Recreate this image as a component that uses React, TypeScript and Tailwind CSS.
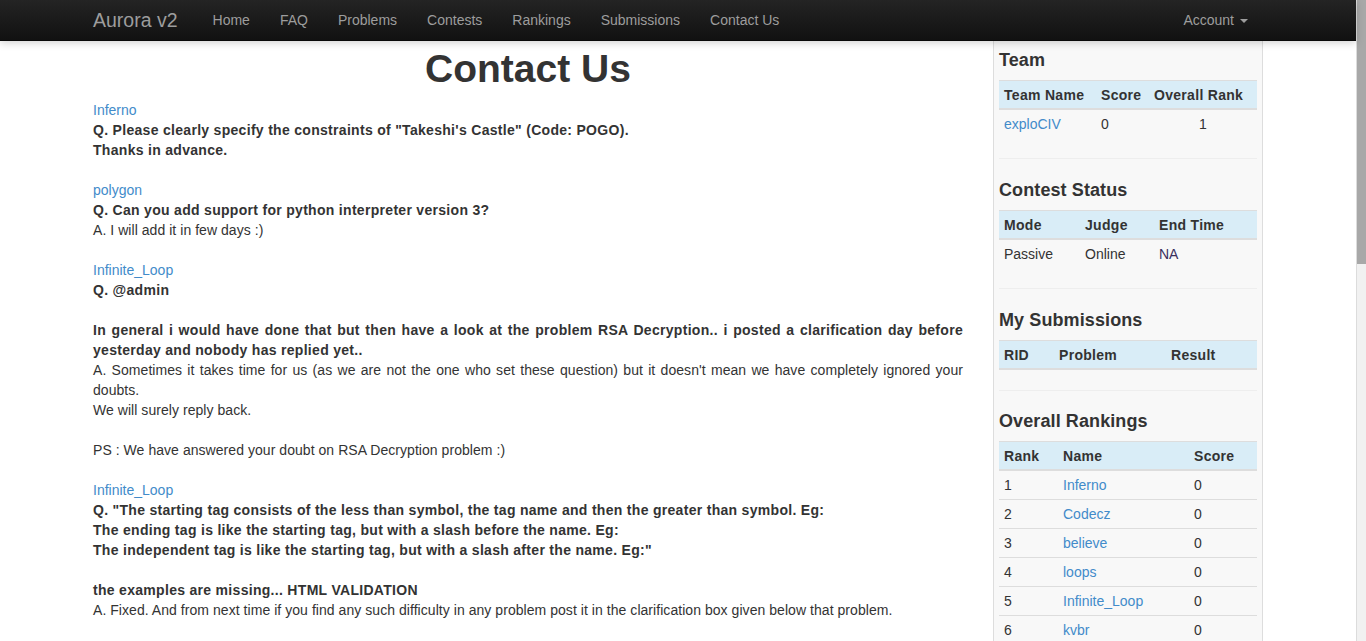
import React from 'react';

interface Entry {
  user: string;
  question: React.ReactNode;
  answer?: React.ReactNode;
}

const NAV_LINKS = ['Home', 'FAQ', 'Problems', 'Contests', 'Rankings', 'Submissions', 'Contact Us'];

const ENTRIES: Entry[] = [
  {
    user: 'Inferno',
    question: (
      <>
        Q. Please clearly specify the constraints of "Takeshi's Castle" (Code: POGO).
        <br />
        Thanks in advance.
      </>
    ),
  },
  {
    user: 'polygon',
    question: <>Q. Can you add support for python interpreter version 3?</>,
    answer: <>A. I will add it in few days :)</>,
  },
  {
    user: 'Infinite_Loop',
    question: (
      <>
        Q. @admin
        <br />
        <br />
        In general i would have done that but then have a look at the problem RSA Decryption.. i posted a
        clarification day before yesterday and nobody has replied yet..
      </>
    ),
    answer: (
      <>
        A. Sometimes it takes time for us (as we are not the one who set these question) but it doesn't mean we
        have completely ignored your doubts.
        <br />
        We will surely reply back.
        <br />
        <br />
        PS : We have answered your doubt on RSA Decryption problem :)
      </>
    ),
  },
  {
    user: 'Infinite_Loop',
    question: (
      <>
        Q. "The starting tag consists of the less than symbol, the tag name and then the greater than symbol. Eg:
        <br />
        The ending tag is like the starting tag, but with a slash before the name. Eg:
        <br />
        The independent tag is like the starting tag, but with a slash after the name. Eg:"
        <br />
        <br />
        the examples are missing... HTML VALIDATION
      </>
    ),
    answer: (
      <>
        A. Fixed. And from next time if you find any such difficulty in any problem post it in the clarification
        box given below that problem.
      </>
    ),
  },
];

const RANKINGS = [
  { rank: 1, name: 'Inferno' },
  { rank: 2, name: 'Codecz' },
  { rank: 3, name: 'believe' },
  { rank: 4, name: 'loops' },
  { rank: 5, name: 'Infinite_Loop' },
  { rank: 6, name: 'kvbr' },
  { rank: 7, name: 'AJ' },
];

const Th: React.FC<{ children: React.ReactNode }> = ({ children }) => (
  <th className="text-left font-bold tracking-[0.3px] px-[5px] pt-[4px] pb-[3px] leading-[20px] border-t border-b-2 border-[#dddddd]">
    {children}
  </th>
);

const Td: React.FC<{ children: React.ReactNode; first?: boolean; className?: string }> = ({
  children,
  first,
  className = '',
}) => (
  <td className={`px-[5px] py-[4px] leading-[20px] ${first ? '' : 'border-t border-[#dddddd]'} ${className}`}>
    {children}
  </td>
);

const Section: React.FC<{ title: string; children: React.ReactNode; last?: boolean; tight?: boolean }> = ({
  title,
  children,
  last,
  tight,
}) => (
  <div>
    <h3 className="text-[18px] font-bold leading-[20px] tracking-[0.1px]">{title}</h3>
    <div className="mt-[10px]">{children}</div>
    {!last && (
      <hr className={`mt-[20px] ${tight ? 'mb-[20px]' : 'mb-[21px]'} border-t border-[#eeeeee]`} />
    )}
  </div>
);

export default function App() {
  return (
    <div className="flex h-[641px] overflow-hidden bg-white font-['Liberation_Sans',Arial,sans-serif] text-[14px] text-[#333333]">
      <div className="w-[1356px] flex flex-col">
        {/* Navbar */}
        <nav className="relative z-10 h-[41px] shrink-0 bg-linear-to-b from-[#242424] to-[#111111] border-b border-[#080808] shadow-[0_2px_8px_rgba(0,0,0,0.18)]">
          <div className="flex items-center h-full px-[93px] text-[#9d9d9d]">
            <span className="text-[19.5px] leading-[40px] mr-[35px]">Aurora v2</span>
            <ul className="flex items-center gap-[30px] text-[14px]">
              {NAV_LINKS.map((link) => (
                <li key={link}>
                  <a className="leading-[40px]">{link}</a>
                </li>
              ))}
            </ul>
            <div className="ml-auto flex items-center mr-[15px]">
              <span className="leading-[40px]">Account</span>
              <span className="ml-[6px] mt-[1px] w-0 h-0 border-x-[4px] border-x-transparent border-t-[4px] border-t-[#9d9d9d]" />
            </div>
          </div>
        </nav>

        <div className="flex flex-1 px-[93px] gap-[30px]">
          {/* Main column */}
          <main className="w-[870px] shrink-0 text-justify leading-[20px]">
            <h1 className="text-center text-[39px] font-bold leading-[43px] mt-[6px] mb-[10px]">Contact Us</h1>
            {ENTRIES.map((entry, i) => (
              <div key={i} className="mb-[20px]">
                <a className="text-[#428bca] block">{entry.user}</a>
                <div className="font-bold tracking-[0.3px]">{entry.question}</div>
                {entry.answer && <div className="tracking-[0.05px]">{entry.answer}</div>}
              </div>
            ))}
          </main>

          {/* Sidebar */}
          <aside className="w-[270px] shrink-0 bg-[#f8f8f8] border-x border-[#dddddd] px-[5px] pt-[9px]">
            <Section title="Team">
              <table className="w-full table-fixed border-collapse">
                <colgroup>
                  <col className="w-[97px]" />
                  <col className="w-[53px]" />
                  <col className="w-[108px]" />
                </colgroup>
                <thead className="bg-[#d9edf7]">
                  <tr>
                    <Th>Team Name</Th>
                    <Th>Score</Th>
                    <Th>Overall Rank</Th>
                  </tr>
                </thead>
                <tbody>
                  <tr>
                    <Td first>
                      <a className="text-[#428bca]">exploCIV</a>
                    </Td>
                    <Td first>0</Td>
                    <Td first className="text-center">
                      1
                    </Td>
                  </tr>
                </tbody>
              </table>
            </Section>

            <Section title="Contest Status">
              <table className="w-full table-fixed border-collapse">
                <colgroup>
                  <col className="w-[81px]" />
                  <col className="w-[74px]" />
                  <col className="w-[103px]" />
                </colgroup>
                <thead className="bg-[#d9edf7]">
                  <tr>
                    <Th>Mode</Th>
                    <Th>Judge</Th>
                    <Th>End Time</Th>
                  </tr>
                </thead>
                <tbody>
                  <tr>
                    <Td first>Passive</Td>
                    <Td first>Online</Td>
                    <Td first className="text-[#3b2f5e]">
                      NA
                    </Td>
                  </tr>
                </tbody>
              </table>
            </Section>

            <Section title="My Submissions" tight>
              <table className="w-full table-fixed border-collapse">
                <colgroup>
                  <col className="w-[55px]" />
                  <col className="w-[112px]" />
                  <col className="w-[91px]" />
                </colgroup>
                <thead className="bg-[#d9edf7]">
                  <tr>
                    <Th>RID</Th>
                    <Th>Problem</Th>
                    <Th>Result</Th>
                  </tr>
                </thead>
              </table>
            </Section>

            <Section title="Overall Rankings" last>
              <table className="w-full table-fixed border-collapse">
                <colgroup>
                  <col className="w-[59px]" />
                  <col className="w-[131px]" />
                  <col className="w-[68px]" />
                </colgroup>
                <thead className="bg-[#d9edf7]">
                  <tr>
                    <Th>Rank</Th>
                    <Th>Name</Th>
                    <Th>Score</Th>
                  </tr>
                </thead>
                <tbody>
                  {RANKINGS.map((r, i) => (
                    <tr key={r.rank}>
                      <Td first={i === 0}>{r.rank}</Td>
                      <Td first={i === 0}>
                        <a className="text-[#428bca]">{r.name}</a>
                      </Td>
                      <Td first={i === 0}>0</Td>
                    </tr>
                  ))}
                </tbody>
              </table>
            </Section>
          </aside>
        </div>
      </div>

      {/* Scrollbar */}
      <div className="w-[10px] shrink-0 bg-[#f1f1f1] border-l border-[#dcdcdc] flex flex-col">
        <div className="h-[264px] bg-[#a8a8a8]" />
      </div>
    </div>
  );
}
